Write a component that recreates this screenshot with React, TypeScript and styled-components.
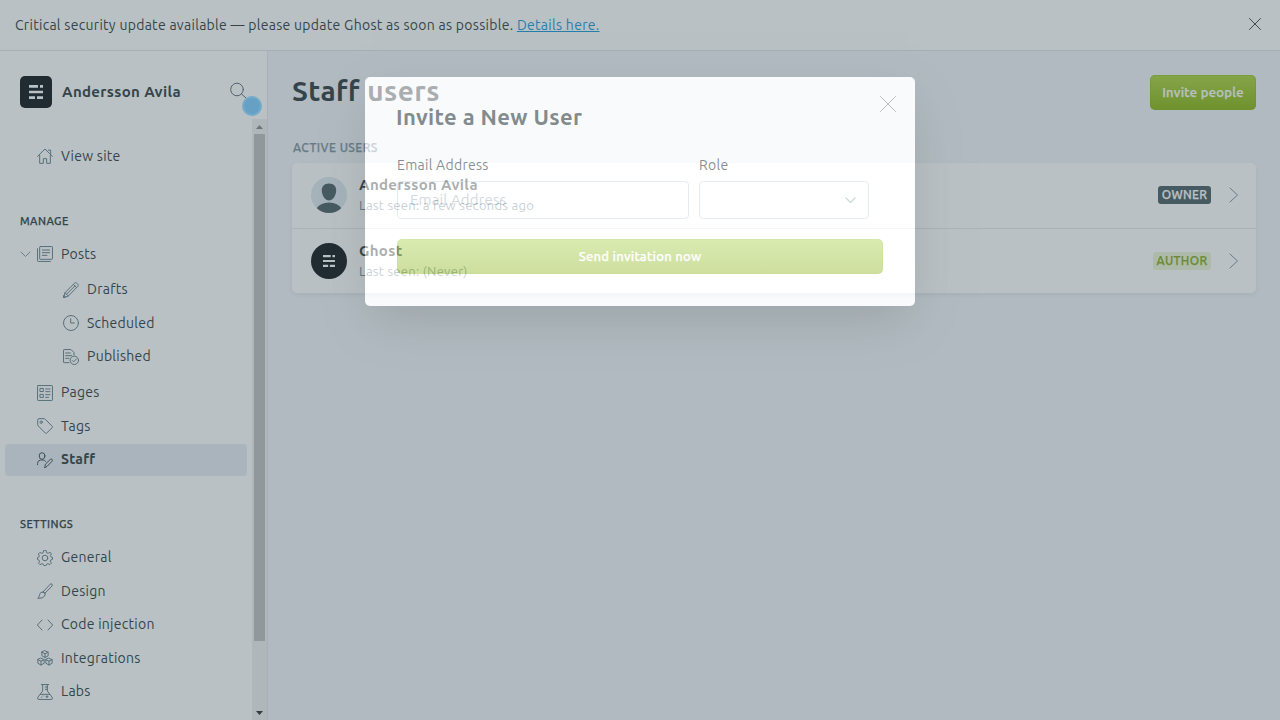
import React from 'react';
import styled, { createGlobalStyle } from 'styled-components';

const Global = createGlobalStyle`
  * { box-sizing: border-box; }
  body { margin: 0; overflow: hidden; font-family: Ubuntu, 'Noto Sans', sans-serif; color: #343f44; }
  svg { display: block; fill: none; stroke: currentColor; flex: none; }
`;

const Shell = styled.div`
  width: 1280px; height: 720px; overflow: hidden; position: relative;
  display: flex; flex-direction: column; background: #fff;
`;
const Alert = styled.header`
  height: 51px; flex: none; padding: 0 19px 2px 15px; border-bottom: 1px solid #dfe3e9;
  display: flex; align-items: center; justify-content: space-between; color: #3d4a50;
  & > span { padding-top: 2px; color: #343f44; }
`;
const Label = styled.span<{ $size?: number; $ls?: number; $weight?: number }>`
  font-size: ${p => p.$size ?? 14}px; letter-spacing: ${p => p.$ls ?? 0.28}px;
  font-weight: ${p => p.$weight ?? 400}; line-height: 20px; white-space: nowrap;
`;
const Medium = styled(Label)`
  font-weight: 500;
  -webkit-text-stroke: 0.25px currentColor;
`;
const AlertLink = styled.a`color: #1c9ad6; text-decoration: underline;`;
const Body = styled.div`flex: 1; min-height: 0; display: flex;`;
const Sidebar = styled.nav`
  width: 268px; flex: none; border-right: 1px solid #e5e9f0; display: flex; flex-direction: column;
`;
const SiteHead = styled.div`
  height: 68px; flex: none; padding: 25px 20px 0 20px; display: flex; align-items: flex-start;
`;
const SiteName = styled.div`flex: 1; padding: 6px 0 0 10px; display: flex;`;
const SearchButton = styled.div`padding-top: 6px; color: #5d7078;`;
const NavScroll = styled.div`flex: 1; min-height: 0; display: flex;`;
const NavList = styled.div`flex: 1; padding: 21px 5px 0; overflow: hidden;`;
const NavRow = styled.div<{ $sub?: boolean; $active?: boolean }>`
  height: 32px; margin-bottom: 1.5px; border-radius: 4px; display: flex; align-items: center;
  padding-left: ${p => (p.$sub ? 58 : 15)}px;
  background: ${p => (p.$active ? '#e7ebf3' : 'transparent')};
  color: ${p => (p.$active ? '#3d4f58' : '#667d89')};
  & > span { margin-left: 8px; color: #343f44; padding-bottom: 1px; }
`;
const Caret = styled.div`width: 17px; color: #8a9ba5;`;
const SubNav = styled.div`padding: 2px 0 2.5px;`;
const NavHeading = styled.h4`
  margin: 0; padding: 37px 0 7.5px 15px; font-size: 11px; line-height: 20px; display: flex;
`;
const ScrollTrack = styled.div`
  width: 15px; background: #f1f1f1; display: flex; flex-direction: column; align-items: center;
`;
const ScrollThumb = styled.div`width: 11px; height: 507px; background: #c1c1c1;`;
const ScrollArrow = styled.div<{ $down?: boolean }>`
  height: 15px; display: flex; align-items: center; color: ${p => (p.$down ? '#343434' : '#8b8b8b')};
  margin-top: ${p => (p.$down ? 'auto' : '0')};
`;
const Main = styled.main`flex: 1; background: #f2f5f9; padding: 24px 24px 0;`;
const MainHead = styled.div`display: flex; justify-content: space-between; align-items: flex-start; height: 63px;`;
const Title = styled.h2`margin: 0; font-size: 28px; line-height: 32px; letter-spacing: 0.45px; font-weight: 700;`;
const GreenButton = styled.button<{ $wide?: boolean }>`
  width: ${p => (p.$wide ? '486px' : '106px')}; height: 35px; padding: 0 0 1px; border: 0; border-radius: 5px;
  color: #fff; font-family: inherit; display: flex; align-items: center; justify-content: center;
  background: ${p => (p.$wide ? 'linear-gradient(#bfdd78, #aac85a)' : 'linear-gradient(#b0d444, #8cb516)')};
  box-shadow: inset 0 0 0 1px rgba(140, 185, 30, ${p => (p.$wide ? 0.12 : 0.5)});
`;
const SectionName = styled.div`height: 25px; padding-left: 1px; color: #8295a1; display: flex;`;
const Card = styled.section`
  background: #fff; border-radius: 5px; height: 130px; box-shadow: 0 2px 5px rgba(60, 80, 100, 0.09);
`;
const UserText = styled.div`flex: 1; padding: 0 0 1px 12px; display: flex; flex-direction: column;`;
const UserRow = styled.div`
  height: 65px; display: flex; align-items: center; padding: 0 17px 1px 19px;
  & + & { border-top: 1px solid #e4e9ef; }
  & + & ${UserText} { padding-top: 1px; padding-bottom: 0; }
`;
const Avatar = styled.div<{ $round?: boolean; $light?: boolean }>`
  width: ${p => (p.$round ? 36 : 32)}px; height: ${p => (p.$round ? 36 : 32)}px; flex: none;
  border-radius: ${p => (p.$round ? '50%' : '5px')}; background: ${p => (p.$light ? '#dfe9f1' : '#15191f')};
  color: #fff; overflow: hidden; display: flex; align-items: center; justify-content: center;
`;
const Muted = styled(Label)`color: #7d929d;`;
const Badge = styled.div<{ $owner?: boolean }>`
  width: ${p => (p.$owner ? 53 : 58)}px; height: 18px; border-radius: 3px; margin-right: 18px;
  display: flex; align-items: center; justify-content: center;
  background: ${p => (p.$owner ? '#4f6167' : '#edf5d5')}; color: ${p => (p.$owner ? '#fff' : '#84ad20')};
`;
const RowArrow = styled.div`color: #85959c;`;

const Modal = styled.div`
  position: absolute; left: 365px; top: 77px; width: 550px; height: 229px; opacity: 0.58;
  background: #fff; border-radius: 5px; padding: 18px 18px 0 32px;
  box-shadow: 0 18px 48px -8px rgba(50, 60, 55, 0.5), 0 0 0 1400px rgba(57, 79, 88, 0.6);
`;
const ModalHead = styled.div`
  display: flex; justify-content: space-between; height: 60px; color: #8f969a;
  & > svg { margin: 1px 1px 0 0; }
`;
const ModalTitle = styled.h1`
  margin: 6px 0 0 -1px; font-size: 22px; line-height: 32px; letter-spacing: 0.36px; color: #343f44; font-weight: 700;
`;
const Fields = styled.div`display: flex; gap: 10px; margin-bottom: 20px;`;
const Field = styled.label<{ $w: number }>`width: ${p => p.$w}px; display: flex; flex-direction: column; gap: 6px;`;
const Control = styled.div`
  height: 38px; border: 1px solid #d5dfe7; border-radius: 4px; padding: 0 12px; color: #b4c1c8;
  display: flex; align-items: center;
  & > svg { margin-left: auto; color: #aebcc4; }
`;
const ClickMark = styled.div`
  position: absolute; left: 242px; top: 96px; width: 20px; height: 20px; border-radius: 50%;
  background: #66a1c5; border: 2px solid #74aaca;
`;

const Svg = ({ s = 16, w, h, sw = 1, box = 24, children }: {
  s?: number; w?: number; h?: number; sw?: number; box?: number | string; children: React.ReactNode;
}) => (
  <svg width={w ?? s} height={h ?? s} viewBox={typeof box === 'string' ? box : `0 0 ${box} ${box}`}
    strokeWidth={sw} strokeLinecap="round" strokeLinejoin="round">{children}</svg>
);

const Cube = ({ x, y }: { x: number; y: number }) => (
  <path d={`M${x} ${y - 5.2}l4.7 2.2v5.4l-4.7 2.6-4.7-2.6v-5.4zM${x - 4.7} ${y - 3}l4.7 2.3 4.7-2.3M${x} ${y - 0.7}v5.7`} />
);

const icons: Record<string, React.ReactNode> = {
  home: <path d="M.8 12.500 12 1.500l11.200 11M17 3.200h3.500v6M4 11v12h5.500v-7h5v7H20V11" />,
  posts: <><rect x="4" y=".8" width="19.200" height="19.200" rx="1" /><path d="M.8 4v18q0 1.200 1.200 1.200H20M8 6h11M8 10h11M8 14h7" /></>,
  drafts: <><path d="M1 23l2-7L17.500 1.600q1.500-1.300 3 0l1.800 1.800q1.500 1.500 0 3L8 21zM3 16l5 5M15.500 3.600l4.900 4.900M5.200 18.500 18 5.800M1 23l2.500-.7-1.800-1.800z" /></>,
  clock: <><circle cx="12" cy="12" r="11.200" /><path d="M11.500 5.500V12H17" /></>,
  published: <><path d="M9 20.500H1.800q-1 0-1-1V1.800q0-1 1-1H12l4.500 4.500V9M4 6h7M4 10h9M4 14h5" /><circle cx="17" cy="17" r="6.300" /><path d="m14 17.300 2 2 4-4.400" /></>,
  pages: <><rect x=".8" y=".8" width="22.400" height="22.400" rx="1" /><path d="M5 5.200h4.500v4.600H5zM5 14h4.500v4.600H5zM13 6h6.500M13 10h6.500M13 14.500h6.500M13 18.500h4.500" /></>,
  tags: <><path d="M1 3q0-2 2-2h7.500q1 0 2 1L23 12.700q.8.8 0 1.600l-8.700 8.500q-.8.800-1.600 0L2 12q-1-1-1-2z" /><circle cx="6.300" cy="6.300" r="1.800" /></>,
  staff: <><ellipse cx="7.600" cy="6" rx="4.300" ry="5" /><path d="M.8 19v-2q0-4 4.500-5h4q2.500.4 3.600 2M11.500 23.200l1.200-5L20 11q1.200-1 2.500 0 1.300 1.300.3 2.600L15.700 21z" /></>,
  general: <><circle cx="12" cy="12" r="4.200" /><path d="m10 1-.8 3.200-2 .9L4.400 3.500 2 6l1.500 2.800-.9 2.100-2 .6v2.800l2.300.8.9 2L2.400 20l2 2 3-1.500 2 .8.900 2.200h3.200l.9-2.200 2-.8 3 1.400 2.100-2.100-1.400-3 .8-2 2.300-.8v-3l-2.300-.7-.8-2L21.600 5.500 19.400 3.400 16.700 5 14.500 4.200 13.700 1z" /></>,
  design: <path d="M9.500 13 19.700 1.900q1.400-1.400 2.800-.2 1.200 1.300 0 2.800L12 15.300M9.500 13l3 2.800M8 13.500q-3 0-4 3.500L3 20.500q-.5 2-2 2.500 8 .5 10.500-3.500Q13 17 11 15t-3-1.500" />,
  code: <path d="m7.500 4.500-7 7.500 7 7.500M16.500 4.500l7 7.500-7 7.500" />,
  integrations: <><Cube x={12} y={6.300} /><Cube x={6} y={17.500} /><Cube x={18} y={17.500} /></>,
  labs: <><path d="M6.500.8h11M8.500 1v9.500L1.200 20q-1.300 3.200 1.800 3.200h18q3.100 0 1.800-3.200l-7.300-9.500V1M5 15.500h14M15.500 4.500h-3M15.500 8h-3" /><path d="M15 17.500v3M13.500 19h3M6.500 20h.3M9 18h.3" /></>,
};

const Item = ({ icon, text, sub, active, caret }: {
  icon: string; text: string; sub?: boolean; active?: boolean; caret?: boolean;
}) => (
  <NavRow $sub={sub} $active={active}>
    {!sub && <Caret>{caret && <Svg w={11} h={7} box="0 0 11 7"><path d="m1 1 4.500 4.500L10 1" /></Svg>}</Caret>}
    <Svg sw={1.450}>{icons[icon]}</Svg>
    <Label $ls={0.26} $weight={active ? 700 : 400}>{text}</Label>
  </NavRow>
);

const Logo = ({ s = 14 }: { s?: number }) => (
  <svg width={s} height={s} viewBox="0 0 14 14" style={{ fill: 'currentColor', stroke: 'none' }}>
    <path d="M0 0h9v2.700H0zM11 0h3v2.700h-3zM0 5.700h14v2.600H0zM0 11.300h6V14H0zM8 11.300h6V14H8z" />
  </svg>
);

const Cross = ({ s }: { s: number }) => (
  <Svg s={s} box={s}><path d={`M.5 .5 ${s - 0.5} ${s - 0.5}M${s - 0.5} .5 .5 ${s - 0.5}`} /></Svg>
);

const User = ({ name, seen, role, owner }: {
  name: string; seen: string; role: string; owner?: boolean;
}) => (
  <UserRow>
    <Avatar $round $light={owner}>
      {owner ? (
        <svg width="36" height="36" viewBox="0 0 36 36" style={{ fill: '#4f6167', stroke: 'none' }}>
          <path d="M18 6.500c5 0 7.500 3.500 7.200 7.500-.4 5-3.500 9.500-7.200 9.500s-6.800-4.500-7.200-9.500C10.500 10 13 6.500 18 6.500M5 32q4-6.500 13-6.500T31 32l-4 4H9z" />
        </svg>
      ) : <Logo s={12} />}
    </Avatar>
    <UserText>
      <Label $size={15} $weight={700} $ls={0.34}>{name}</Label>
      <Muted $size={13} $ls={0.28}>{seen}</Muted>
    </UserText>
    <Badge $owner={owner}><Medium $size={12} $ls={0.35}>{role}</Medium></Badge>
    <RowArrow><Svg w={10} h={16} box="0 0 10 16"><path d="m1 1 7.500 7L1 15" /></Svg></RowArrow>
  </UserRow>
);

export default function App() {
  return (
    <Shell>
      <Global />
      <Alert>
        <Label $ls={0.288}>Critical security update available — please update Ghost as soon as possible. <AlertLink>Details here.</AlertLink></Label>
        <Cross s={12} />
      </Alert>
      <Body>
        <Sidebar>
          <SiteHead>
            <Avatar><Logo /></Avatar>
            <SiteName><Label $size={15} $weight={700} $ls={0.35}>Andersson Avila</Label></SiteName>
            <SearchButton><Svg s={17} box={17}><circle cx="7" cy="7.500" r="6.300" /><path d="m11.500 12 5 4.500" /></Svg></SearchButton>
          </SiteHead>
          <NavScroll>
            <NavList>
              <Item icon="home" text="View site" />
              <NavHeading><Medium $size={11} $ls={0.45}>MANAGE</Medium></NavHeading>
              <Item icon="posts" text="Posts" caret />
              <SubNav>
                <Item icon="drafts" text="Drafts" sub />
                <Item icon="clock" text="Scheduled" sub />
                <Item icon="published" text="Published" sub />
              </SubNav>
              <Item icon="pages" text="Pages" />
              <Item icon="tags" text="Tags" />
              <Item icon="staff" text="Staff" active />
              <NavHeading><Medium $size={11} $ls={0.45}>SETTINGS</Medium></NavHeading>
              <Item icon="general" text="General" />
              <Item icon="design" text="Design" />
              <Item icon="code" text="Code injection" />
              <Item icon="integrations" text="Integrations" />
              <Item icon="labs" text="Labs" />
            </NavList>
            <ScrollTrack>
              <ScrollArrow><Svg w={7} h={4} box="0 0 7 4" sw={0}><path fill="currentColor" d="M0 4 3.500 0 7 4z" /></Svg></ScrollArrow>
              <ScrollThumb />
              <ScrollArrow $down><Svg w={7} h={4} box="0 0 7 4" sw={0}><path fill="currentColor" d="M0 0 3.500 4 7 0z" /></Svg></ScrollArrow>
            </ScrollTrack>
          </NavScroll>
        </Sidebar>
        <Main>
          <MainHead>
            <Title>Staff users</Title>
            <GreenButton><Medium $size={13} $ls={0.3}>Invite people</Medium></GreenButton>
          </MainHead>
          <SectionName><Medium $size={12} $ls={0.45}>ACTIVE USERS</Medium></SectionName>
          <Card>
            <User name="Andersson Avila" seen="Last seen: a few seconds ago" role="OWNER" owner />
            <User name="Ghost" seen="Last seen: (Never)" role="AUTHOR" />
          </Card>
        </Main>
      </Body>
      <Modal>
        <ModalHead>
          <ModalTitle>Invite a New User</ModalTitle>
          <Cross s={16} />
        </ModalHead>
        <Fields>
          <Field $w={292}>
            <Label>Email Address</Label>
            <Control><Label $size={15} $ls={0.15}>Email Address</Label></Control>
          </Field>
          <Field $w={170}>
            <Label>Role</Label>
            <Control><Svg w={11} h={7} box="0 0 11 7" sw={1.300}><path d="m1 1 4.500 4.500L10 1" /></Svg></Control>
          </Field>
        </Fields>
        <GreenButton $wide><Medium $size={13} $ls={0.27}>Send invitation now</Medium></GreenButton>
      </Modal>
      <ClickMark />
    </Shell>
  );
}
